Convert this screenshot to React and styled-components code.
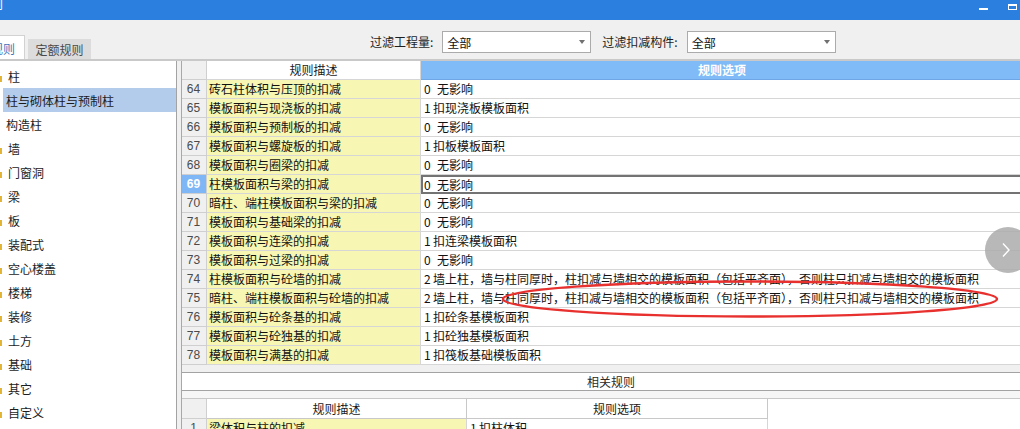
import React from 'react';
import styled, { createGlobalStyle, css } from 'styled-components';

const Global = createGlobalStyle`
  html, body { margin: 0; padding: 0; background: #fff; }
  body {
    font-family: "Noto Sans CJK SC", "Noto Sans", sans-serif;
    font-size: 12px;
    color: #111;
  }
  * { box-sizing: border-box; }
`;

const Window = styled.div`
  position: relative;
  width: 1020px;
  height: 429px;
  overflow: hidden;
  display: flex;
  flex-direction: column;
  background: #f0f0f0;
`;

const TitleBar = styled.div`
  height: 20px;
  flex: none;
  background: #2b7fdf;
  display: flex;
  align-items: flex-start;
  overflow: hidden;
`;

const TitleText = styled.span`
  color: #fff;
  font-size: 12px;
  line-height: 12px;
  margin-left: -45px;
  margin-top: -2px;
  white-space: nowrap;
`;

const WinButtons = styled.div`
  margin-left: auto;
  display: flex;
  align-items: flex-start;
  gap: 20px;
  padding-right: 3px;
`;

const MinBtn = styled.div`
  width: 9px;
  height: 2px;
  margin-top: 8px;
  background: #fff;
`;

const MaxBtn = styled.div`
  width: 9px;
  height: 6px;
  margin-top: 4px;
  border: 1px solid #fff;
  border-top-width: 2px;
`;

const Toolbar = styled.div`
  height: 39px;
  flex: none;
  display: flex;
  background: #f0f0f0;
`;

const Tabs = styled.div`
  display: flex;
  align-items: flex-end;
  gap: 3px;
  width: 91px;
  flex: none;
`;

const Tab = styled.div`
  display: flex;
  align-items: center;
  overflow: hidden;
  white-space: nowrap;
  font-size: 12px;
  ${p => p.$active ? css`
    width: 25px;
    height: 24px;
    background: #fff;
    border-top: 1px solid #d2d2d2;
    border-right: 1px solid #d2d2d2;
    color: #3b73bd;
    justify-content: flex-end;
    padding: 2px 9px 0 0;
  ` : css`
    width: 63px;
    height: 20px;
    background: #dcdcdc;
    color: #4a4a4a;
    justify-content: center;
  `}
`;

const Filters = styled.div`
  display: flex;
  align-items: flex-start;
  padding-top: 11px;
  margin-left: 279px;
  gap: 11px;
`;

const FilterGroup = styled.div`
  display: flex;
  align-items: center;
  gap: 9px;
`;

const Label = styled.span`
  line-height: 22px;
  color: #1e1e1e;
  white-space: nowrap;
`;

const Select = styled.div`
  width: 149px;
  height: 22px;
  border: 1px solid #ababab;
  background: #fff;
  display: flex;
  align-items: center;
  padding: 0 5px 0 4px;
  color: #111;
`;

const Caret = styled.span`
  margin-left: auto;
  width: 0;
  height: 0;
  border-left: 3.5px solid transparent;
  border-right: 3.5px solid transparent;
  border-top: 4px solid #707070;
`;

const Divider = styled.div`
  height: 2px;
  flex: none;
  background: #c9c9c9;
`;

const Body = styled.div`
  flex: 1;
  min-height: 0;
  display: flex;
  gap: 4px;
  background: #f0f0f0;
`;

const Sidebar = styled.div`
  width: 177px;
  flex: none;
  background: #fff;
  border-right: 1px solid #a3a3a3;
  padding-top: 3px;
  overflow: hidden;
`;

const TreeItem = styled.div`
  height: 24px;
  display: flex;
  align-items: center;
  white-space: nowrap;
  color: #1c1c1c;
  ${p => p.$child ? css`
    margin-left: 3px;
    padding-left: 3px;
  ` : css`
    padding-left: 0;
  `}
  ${p => p.$selected && css`
    background: #b3cceb;
  `}
`;

const Marker = styled.span`
  width: 2px;
  height: 6px;
  background: #e3b536;
  align-self: flex-end;
  margin: 0 6px 6px 0;
`;

const Main = styled.div`
  flex: 1;
  min-width: 0;
  display: flex;
  flex-direction: column;
  border-left: 1px solid #a8a8a8;
  background: #f0f0f0;
  overflow: hidden;
`;

const Grid = styled.div`
  display: grid;
  grid-template-columns: ${p => p.$cols};
  grid-auto-rows: 19px;
  background: #fff;
  flex: none;
`;

const Cell = styled.div`
  border-right: 1px solid #d6d6d6;
  border-bottom: 1px solid #d6d6d6;
  white-space: pre;
  overflow: hidden;
  line-height: 18px;
  font-size: 12px;
  color: #111;
`;

const NumCell = styled(Cell)`
  background: #f0f0f0;
  border-color: #cfcfcf;
  text-align: center;
  font-family: "Liberation Sans", "Noto Sans", sans-serif;
  color: #4a4a4a;
  padding-right: 1px;
  ${p => p.$selected && css`
    background: #7fb7f6;
    color: #fff;
    font-weight: bold;
  `}
`;

const DescCell = styled(Cell)`
  background: #f7f7b3;
  padding-left: 2px;
`;

const OptCell = styled(Cell)`
  padding-left: 3px;
  border-right: none;
  display: flex;
  ${p => p.$focused && css`
    border: 2px solid #737373;
    border-right: none;
    padding-left: 1px;
    line-height: 15px;
  `}
`;

const Code = styled.span`
  display: inline-block;
  flex: none;
  width: ${p => p.$w}px;
`;

const HeadCell = styled(Cell)`
  text-align: center;
  background: #fff;
  color: #1a1a1a;
  ${p => p.$accent && css`
    background: #80bbf7;
    color: #fff;
    font-weight: bold;
    border-right: none;
    border-bottom-color: #6ea6e6;
    padding-left: 3px;
  `}
`;

const Strip = styled.div`
  height: 7px;
  flex: none;
`;

const RelatedBar = styled.div`
  height: 19px;
  flex: none;
  background: #fff;
  border-top: 1px solid #a3a3a3;
  border-bottom: 1px solid #a3a3a3;
  display: flex;
  align-items: center;
  justify-content: center;
  padding-left: 20px;
  color: #2a2a2a;
  line-height: 17px;
`;

const BottomGap = styled.div`
  height: 7px;
  flex: none;
  background: #f6f6f6;
`;

const BottomGrid = styled(Grid)`
  border-top: 1px solid #c8c8c8;
  grid-template-rows: 20px;
  flex: 1;
`;

const HeadCellB = styled(HeadCell)`
  line-height: 19px;
  border-color: #c8c8c8;
`;

const EmptyCell = styled.div`
  background: #fff;
`;

const NavButton = styled.div`
  position: absolute;
  left: 985px;
  top: 227px;
  width: 46px;
  height: 46px;
  border-radius: 50%;
  background: rgba(172, 172, 172, 0.85);
  display: flex;
  align-items: center;
  padding-left: 16px;
`;

const Annotation = styled.svg`
  position: absolute;
  left: 0;
  top: 0;
  pointer-events: none;
`;

const sidebarItems = [
  { t: '柱' },
  { t: '柱与砌体柱与预制柱', child: true, selected: true },
  { t: '构造柱', child: true },
  { t: '墙' },
  { t: '门窗洞' },
  { t: '梁' },
  { t: '板' },
  { t: '装配式' },
  { t: '空心楼盖' },
  { t: '楼梯' },
  { t: '装修' },
  { t: '土方' },
  { t: '基础' },
  { t: '其它' },
  { t: '自定义' },
];

const LONG = '墙上柱，墙与柱同厚时，柱扣减与墙相交的模板面积（包括平齐面），否则柱只扣减与墙相交的模板面积';

const rows = [
  [64, '砖石柱体积与压顶的扣减', '0', '无影响'],
  [65, '模板面积与现浇板的扣减', '1', '扣现浇板模板面积'],
  [66, '模板面积与预制板的扣减', '0', '无影响'],
  [67, '模板面积与螺旋板的扣减', '1', '扣板模板面积'],
  [68, '模板面积与圈梁的扣减', '0', '无影响'],
  [69, '柱模板面积与梁的扣减', '0', '无影响'],
  [70, '暗柱、端柱模板面积与梁的扣减', '0', '无影响'],
  [71, '模板面积与基础梁的扣减', '0', '无影响'],
  [72, '模板面积与连梁的扣减', '1', '扣连梁模板面积'],
  [73, '模板面积与过梁的扣减', '0', '无影响'],
  [74, '柱模板面积与砼墙的扣减', '2', LONG],
  [75, '暗柱、端柱模板面积与砼墙的扣减', '2', LONG],
  [76, '模板面积与砼条基的扣减', '1', '扣砼条基模板面积'],
  [77, '模板面积与砼独基的扣减', '1', '扣砼独基模板面积'],
  [78, '模板面积与满基的扣减', '1', '扣筏板基础模板面积'],
];

export default function App() {
  return (
    <>
      <Global />
      <Window>
        <TitleBar>
          <TitleText>设置规则</TitleText>
          <WinButtons>
            <MinBtn />
            <MaxBtn />
          </WinButtons>
        </TitleBar>
        <Toolbar>
          <Tabs>
            <Tab $active>规则</Tab>
            <Tab>定额规则</Tab>
          </Tabs>
          <Filters>
            <FilterGroup>
              <Label>过滤工程量:</Label>
              <Select>全部<Caret /></Select>
            </FilterGroup>
            <FilterGroup>
              <Label>过滤扣减构件:</Label>
              <Select>全部<Caret /></Select>
            </FilterGroup>
          </Filters>
        </Toolbar>
        <Divider />
        <Body>
          <Sidebar>
            {sidebarItems.map(it => (
              <TreeItem key={it.t} $child={it.child} $selected={it.selected}>
                {!it.child && <Marker />}
                {it.t}
              </TreeItem>
            ))}
          </Sidebar>
          <Main>
            <Grid $cols="25px 214px 1fr">
              <NumCell />
              <HeadCell>规则描述</HeadCell>
              <HeadCell $accent>规则选项</HeadCell>
              {rows.map(([n, d, c, o]) => (
                <React.Fragment key={n}>
                  <NumCell $selected={n === 69}>{n}</NumCell>
                  <DescCell>{d}</DescCell>
                  <OptCell $focused={n === 69}>
                    <Code $w={c === '0' ? 13 : 9}>{c}</Code>
                    {o}
                  </OptCell>
                </React.Fragment>
              ))}
            </Grid>
            <Strip />
            <RelatedBar>相关规则</RelatedBar>
            <BottomGap />
            <BottomGrid $cols="25px 260px 301px 1fr">
              <NumCell />
              <HeadCellB>规则描述</HeadCellB>
              <HeadCellB>规则选项</HeadCellB>
              <EmptyCell />
              <NumCell>1</NumCell>
              <DescCell>梁体积与柱的扣减</DescCell>
              <OptCell style={{ borderRight: '1px solid #d6d6d6' }}>
                <Code $w={9}>1</Code>扣柱体积
              </OptCell>
              <EmptyCell />
            </BottomGrid>
          </Main>
        </Body>
        <NavButton>
          <svg width="10" height="16" viewBox="0 0 10 16">
            <path d="M2 1.5 L8 8 L2 14.5" fill="none" stroke="#fff" strokeWidth="1.4" />
          </svg>
        </NavButton>
        <Annotation width="1020" height="429" viewBox="0 0 1020 429">
          <ellipse cx="750" cy="299" rx="247" ry="17.5" fill="none" stroke="#e8302e" strokeWidth="2.4" />
        </Annotation>
      </Window>
    </>
  );
}
